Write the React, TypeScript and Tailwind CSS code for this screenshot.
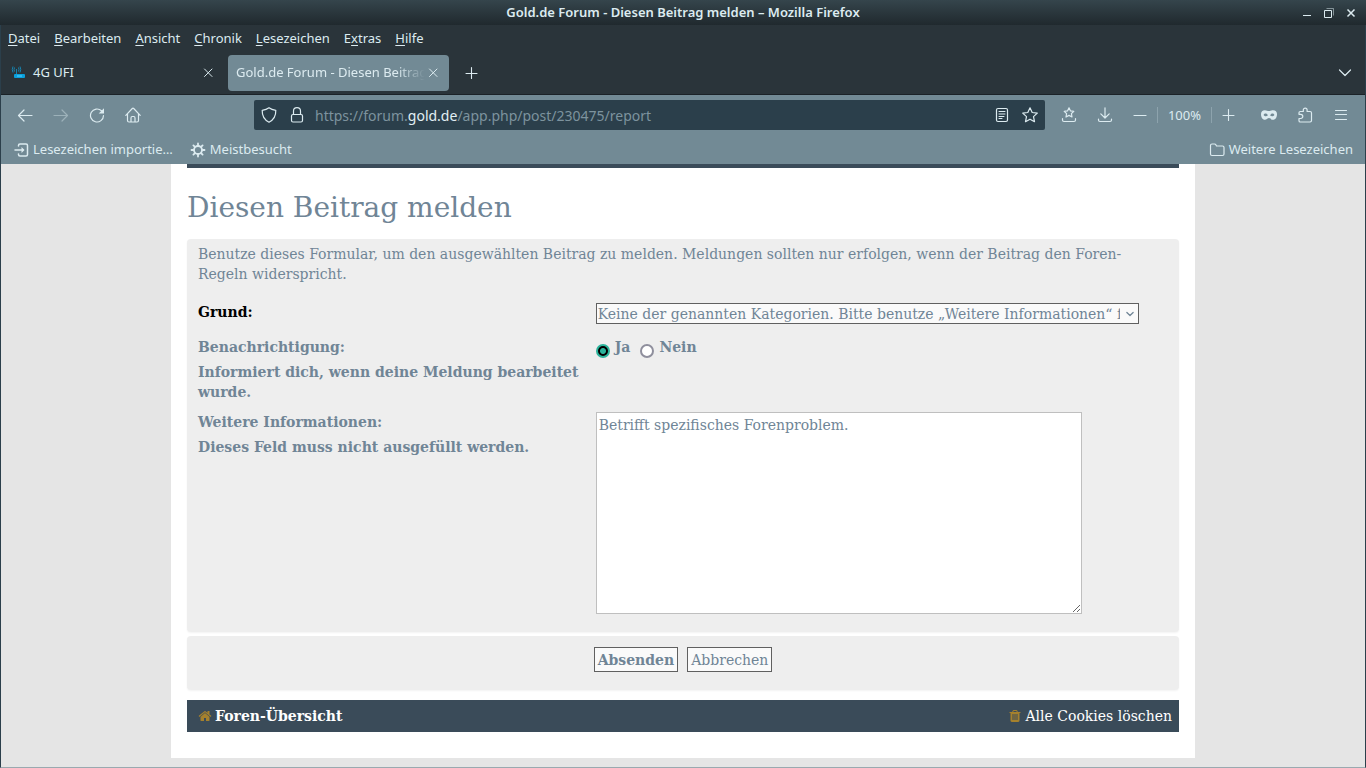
import type { ReactNode } from "react";
import { useState } from "react";

const menus = [
  { before: "", key: "D", after: "atei" },
  { before: "", key: "B", after: "earbeiten" },
  { before: "", key: "A", after: "nsicht" },
  { before: "", key: "C", after: "hronik" },
  { before: "", key: "L", after: "esezeichen" },
  { before: "E", key: "x", after: "tras" },
  { before: "", key: "H", after: "ilfe" },
];

function Icon({ children, className = "h-4 w-4" }: { children: ReactNode; className?: string }) {
  return (
    <svg
      viewBox="0 0 16 16"
      fill="none"
      stroke="currentColor"
      strokeWidth="1.2"
      strokeLinecap="round"
      strokeLinejoin="round"
      aria-hidden="true"
      className={`shrink-0 ${className}`}
    >
      {children}
    </svg>
  );
}

function ToolButton({ label, children, className = "w-9" }: { label: string; children: ReactNode; className?: string }) {
  return (
    <button type="button" aria-label={label} className={`flex h-8 shrink-0 items-center justify-center ${className}`}>
      {children}
    </button>
  );
}

function CloseIcon() {
  return (
    <Icon>
      <path d="M4.500 4l7.500 7.500M12 4l-7.500 7.500" strokeWidth="1" />
    </Icon>
  );
}

function PlusIcon() {
  return (
    <Icon>
      <path d="M8.500 2.500v11M3 8.500h11" strokeWidth="1.100" />
    </Icon>
  );
}

function TitleBar() {
  return (
    <div className="grid h-[25px] grid-cols-[1fr_auto_1fr] items-center bg-linear-to-b from-[#35454c] to-[#20292e] text-[#dcebf0]">
      <span />
      <span className="text-[13px] font-semibold">Gold.de Forum - Diesen Beitrag melden – Mozilla Firefox</span>
      <div className="flex justify-end gap-1 pr-1.5">
        <button type="button" aria-label="Minimieren">
          <svg viewBox="0 0 18 18" className="h-[18px] w-[18px]" aria-hidden="true">
            <path d="M5 11h8v1H5z" fill="currentColor" />
          </svg>
        </button>
        <button type="button" aria-label="Wiederherstellen">
          <svg viewBox="0 0 18 18" className="h-[18px] w-[18px]" fill="none" stroke="currentColor" aria-hidden="true">
            <path d="M6.500 4.500h7v7" strokeOpacity=".5" />
            <path d="M4.500 6.500h7v7h-7z" />
          </svg>
        </button>
        <button type="button" aria-label="Schließen">
          <svg viewBox="0 0 18 18" className="h-[18px] w-[18px]" fill="none" stroke="currentColor" aria-hidden="true">
            <path d="M5.500 5.500l7 7M12.500 5.500l-7 7" strokeWidth="1.500" />
          </svg>
        </button>
      </div>
    </div>
  );
}

function MenuBar() {
  return (
    <nav className="flex h-[27px] items-center gap-3.5 px-[7px]">
      {menus.map((menu) => (
        <button key={menu.key} type="button">
          {menu.before}
          <u className="underline-offset-2">{menu.key}</u>
          {menu.after}
        </button>
      ))}
    </nav>
  );
}

function TabStrip() {
  return (
    <div className="flex h-[43px] items-center border-b border-[#1b2227]">
      <div className="flex h-9 w-[227px] items-center pr-3 pl-2.5">
        <svg viewBox="0 0 16 16" className="h-4 w-4" aria-hidden="true">
          <path
            d="M5.500 4v5M3.500 2.500q-1 2 0 4M7.500 2.500q1 2 0 4M2 1.500q-1.500 3 0 6M9 1.500q1.500 3 0 6"
            stroke="#1683ae"
            fill="none"
          />
          <rect x="3" y="9" width="11" height="4" rx="1" fill="#0aa0dc" />
          <path d="M6 11h5" stroke="#55d0ff" />
        </svg>
        <button type="button" className="ml-[6px] flex-1 text-left">
          4G UFI
        </button>
        <button type="button" aria-label="Tab schließen">
          <CloseIcon />
        </button>
      </div>
      <div className="flex h-9 w-[221px] items-center rounded-sm bg-[#728a95] pr-2 pl-2">
        <button
          type="button"
          className="flex-1 overflow-hidden text-left whitespace-nowrap [mask-image:linear-gradient(to_right,black_85%,transparent)]"
        >
          Gold.de Forum - Diesen Beitrag melden
        </button>
        <button type="button" aria-label="Tab schließen">
          <CloseIcon />
        </button>
      </div>
      <ToolButton label="Neuer Tab" className="ml-1 w-9">
        <PlusIcon />
      </ToolButton>
      <ToolButton label="Alle Tabs auflisten" className="mr-0.5 ml-auto w-9">
        <Icon>
          <path d="M2.500 5L8 10.500l5.500-5.500" />
        </Icon>
      </ToolButton>
    </div>
  );
}

function AddressBar() {
  return (
    <div className="ml-[103px] flex h-[30px] min-w-0 flex-1 items-center rounded-xs bg-[#2b3f4b] px-[7px]">
      <Icon>
        <path d="M8 .8C10 2.300 12.500 3 14.800 3.300C15 9 12.500 13 8 15.200C3.500 13 1 9 1.200 3.300C3.500 3 6 2.300 8 .8z" />
      </Icon>
      <Icon className="ml-3 h-4 w-4">
        <rect x="2.500" y="7.500" width="11" height="7.500" rx="1.500" />
        <path d="M4.500 7.500V4a3.500 3.300 0 0 1 7 0v3.500" />
      </Icon>
      <div className="ml-2.5 flex-1 truncate text-[14px] text-[#7d939e]">
        https://forum.<span className="text-[#e2eff4]">gold.de</span>/app.php/post/230475/report
      </div>
      <button type="button" aria-label="Leseansicht" className="mr-3">
        <Icon>
          <rect x="2.500" y="1.500" width="11" height="13" rx="1.500" />
          <path d="M5 4.500h6M5 7h6M5 9.500h5M5 11.500h3" strokeWidth="1" />
        </Icon>
      </button>
      <button type="button" aria-label="Lesezeichen hinzufügen">
        <Icon>
          <path d="M8 .8l2.200 4.700 5.100.6-3.800 3.500 1 5.100L8 12.200l-4.500 2.500 1-5.100L.7 6.100l5.100-.6z" />
        </Icon>
      </button>
    </div>
  );
}

function NavBar() {
  return (
    <div className="flex h-10 items-center px-1.5">
      <ToolButton label="Zurück">
        <Icon>
          <path d="M15 8.500H1.500M7 3L1.500 8.500L7 14" />
        </Icon>
      </ToolButton>
      <ToolButton label="Vor" className="w-9 opacity-40">
        <Icon>
          <path d="M1 8.500h13.500M9 3L14.500 8.500L9 14" />
        </Icon>
      </ToolButton>
      <ToolButton label="Neu laden">
        <Icon>
          <path d="M14.500 8.500A6.500 6.500 0 1 1 12.500 3.800" />
          <path d="M15 1.200v5.300H9.700z" fill="currentColor" stroke="none" />
        </Icon>
      </ToolButton>
      <ToolButton label="Startseite">
        <Icon>
          <path d="M.8 8.300L7.300 1.500q.7-.7 1.400 0L15.200 8.300M2.500 7v6.500q0 1.500 1.500 1.500h8q1.500 0 1.500-1.500V7M6 15v-4q0-1.500 1.200-1.500h1.600q1.200 0 1.200 1.500v4" />
        </Icon>
      </ToolButton>
      <AddressBar />
      <ToolButton label="Lesezeichen" className="ml-1.5 w-9">
        <Icon>
          <path d="M8 .8l1.500 3.100 3.300.4-2.400 2.300.6 3.400L8 8.400 5 10l.6-3.400-2.400-2.300 3.300-.4zM1.500 11.500V13q0 1.500 1.500 1.500h10q1.500 0 1.500-1.500v-1.500" />
        </Icon>
      </ToolButton>
      <ToolButton label="Downloads">
        <Icon>
          <path d="M8 .8v10M3.800 6.800L8 11l4.200-4.200M1.500 12v1q0 1.500 1.500 1.500h10q1.500 0 1.500-1.500v-1" />
        </Icon>
      </ToolButton>
      <ToolButton label="Verkleinern" className="w-[34px]">
        <Icon>
          <path d="M2 8.500h12" />
        </Icon>
      </ToolButton>
      <button type="button" className="h-4 w-[55px] border-x border-[#8da3ad] text-center leading-4">
        100%
      </button>
      <ToolButton label="Vergrößern" className="mr-[7px] w-8">
        <PlusIcon />
      </ToolButton>
      <ToolButton label="Privater Modus">
        <Icon>
          <path
            d="M0 7C0 4.500 1.500 3.200 3.800 3.200c1.900 0 2.700.9 4.200.9s2.300-.9 4.200-.9C14.500 3.200 16 4.500 16 7c0 3.300-1.500 5.800-3.900 5.800-2 0-2.700-1.700-4.100-1.700s-2.100 1.700-4.100 1.700C1.500 12.800 0 10.300 0 7zM2.600 8c.9 1.500 3.300 1.700 4.300.2C5.900 6.200 3.500 6 2.600 8zm6.500.2c1 1.500 3.400 1.300 4.300-.2-.9-2-3.300-1.800-4.300.2z"
            fill="currentColor"
            fillRule="evenodd"
            stroke="none"
          />
        </Icon>
      </ToolButton>
      <ToolButton label="Erweiterungen">
        <Icon>
          <path d="M2 7V5.800q0-1.300 1.300-1.300h3V3a1.900 1.900 0 0 1 3.800 0v1.500h3q1.400 0 1.400 1.400v7.700q0 1.400-1.400 1.400H3.300Q2 15 2 13.700v-2.200h1.700a2 2 0 0 0 0-4.200H2z" />
        </Icon>
      </ToolButton>
      <ToolButton label="Menü öffnen">
        <Icon>
          <path d="M2.500 3.500h11M2.500 7.500h11M2.500 12.500h11" strokeWidth="1.100" />
        </Icon>
      </ToolButton>
    </div>
  );
}

function BookmarksBar() {
  return (
    <div className="flex h-[29px] items-center px-3">
      <button type="button" className="flex items-center gap-1">
        <Icon>
          <path d="M5.500 4V3.500Q5.500 2 7 2h6q1.500 0 1.500 1.500v9Q14.500 14 13 14H7q-1.500 0-1.500-1.500V12M2 8h8" strokeWidth="1.500" />
          <path d="M8.500 5l3 3-3 3z" fill="currentColor" stroke="none" />
        </Icon>
        Lesezeichen importie…
      </button>
      <button type="button" className="ml-[17px] flex items-center gap-1">
        <Icon>
          <circle cx="8" cy="8" r="4" strokeWidth="1.800" />
          <path
            d="M8 1.500v2M8 12.500v2M1.500 8h2M12.500 8h2M3.400 3.400l1.300 1.300M11.300 11.300l1.300 1.300M3.400 12.600l1.300-1.300M11.300 4.700l1.300-1.300"
            strokeWidth="1.800"
          />
        </Icon>
        Meistbesucht
      </button>
      <button type="button" className="ml-auto flex items-center gap-1">
        <Icon>
          <path d="M1.500 12V3.500Q1.500 2 3 2h2.500q1 0 1.500 1l.5 1h6Q15 4 15 5.500V12q0 1.500-1.500 1.500H3Q1.500 13.500 1.500 12z" />
        </Icon>
        Weitere Lesezeichen
      </button>
    </div>
  );
}

const radioClass =
  "mt-[7px] h-3.5 w-3.5 shrink-0 appearance-none rounded-full border-2 border-[#8f8f9d] bg-white checked:border-[#2bb39b] checked:bg-[radial-gradient(circle,#2bb39b_0_2.5px,#000_3.5px)]";

function ReportForm() {
  const [notify, setNotify] = useState(true);

  return (
    <form onSubmit={(event) => event.preventDefault()}>
      <div className="rounded-sm bg-[#eee] px-[11px] pt-[5px] pb-[18px] shadow-xs">
        <p>
          Benutze dieses Formular, um den ausgewählten Beitrag zu melden. Meldungen sollten nur erfolgen, wenn der
          Beitrag den Foren-Regeln widerspricht.
        </p>

        <div className="mt-[18px] grid grid-cols-[41%_1fr] font-bold">
          <label htmlFor="reason" className="text-black">
            Grund:
          </label>
          <div className="relative mt-px mr-[29px]">
            <select
              id="reason"
              className="block h-[21px] w-full appearance-none border border-[#606060] bg-[#fafafa] pr-[18px] pl-px font-normal"
            >
              <option>
                Keine der genannten Kategorien. Bitte benutze „Weitere Informationen“ für eine genauere Beschreibung.
              </option>
            </select>
            <Icon className="pointer-events-none absolute top-1.5 right-1 h-2.5 w-2.5">
              <path d="M3 5.500l5 5 5-5" strokeWidth="2" />
            </Icon>
          </div>
        </div>

        <div className="mt-[13px] grid grid-cols-[41%_1fr] font-bold">
          <div className="space-y-[5px] pr-2.5">
            <p>Benachrichtigung:</p>
            <p>Informiert dich, wenn deine Meldung bearbeitet wurde.</p>
          </div>
          <div className="flex items-start gap-2.5">
            <label className="flex items-start gap-[5px]">
              <input type="radio" name="notify" checked={notify} onChange={() => setNotify(true)} className={radioClass} />
              Ja
            </label>
            <label className="flex items-start gap-[5px]">
              <input type="radio" name="notify" checked={!notify} onChange={() => setNotify(false)} className={radioClass} />
              Nein
            </label>
          </div>
        </div>

        <div className="mt-2.5 grid grid-cols-[41%_1fr] font-bold">
          <div className="space-y-[5px] pr-2.5">
            <label htmlFor="details" className="block">
              Weitere Informationen:
            </label>
            <p>Dieses Feld muss nicht ausgefüllt werden.</p>
          </div>
          <textarea
            id="details"
            defaultValue="Betrifft spezifisches Forenproblem."
            className="block h-[202px] w-[85%] border border-[#bfbfbf] bg-white p-0.5 font-normal"
          />
        </div>
      </div>

      <div className="mt-1 flex justify-center gap-[9px] rounded-sm bg-[#eee] pt-[11px] pb-[18px] shadow-xs">
        <button type="submit" className="h-[25px] border border-[#606060] bg-[#fafafa] px-[3px] font-bold">
          Absenden
        </button>
        <button type="button" className="h-[25px] border border-[#606060] bg-[#fafafa] px-[3px]">
          Abbrechen
        </button>
      </div>
    </form>
  );
}

function FooterBar() {
  return (
    <footer className="mt-2.5 flex h-8 items-center justify-between bg-[#3a4b59] pr-[7px] pl-[11px] text-white">
      <a href="#index" className="flex items-center gap-[3px] font-bold">
        <svg viewBox="0 0 1792 1792" fill="#a5812d" className="h-3.5 w-3.5" aria-hidden="true">
          <path d="M1472 992v480q0 26-19 45t-45 19h-384v-384h-256v384h-384q-26 0-45-19t-19-45v-480q0-1 .5-3t.5-3l575-474 575 474q1 2 1 6zm223-69l-62 74q-8 9-21 11h-3q-13 0-21-7l-692-577-692 577q-12 8-24 7-13-2-21-11l-62-74q-8-10-7-23.500t11-21.500l719-599q32-26 76-26t76 26l244 204v-195q0-14 9-23t23-9h192q14 0 23 9t9 23v408l219 182q10 8 11 21.500t-7 23.500z" />
        </svg>
        Foren-Übersicht
      </a>
      <a href="#cookies" className="flex items-center gap-[3px]">
        <svg viewBox="0 0 1792 1792" fill="#a5812d" className="h-3.5 w-3.5" aria-hidden="true">
          <path d="M704 1376v-704q0-14-9-23t-23-9h-64q-14 0-23 9t-9 23v704q0 14 9 23t23 9h64q14 0 23-9t9-23zm256 0v-704q0-14-9-23t-23-9h-64q-14 0-23 9t-9 23v704q0 14 9 23t23 9h64q14 0 23-9t9-23zm256 0v-704q0-14-9-23t-23-9h-64q-14 0-23 9t-9 23v704q0 14 9 23t23 9h64q14 0 23-9t9-23zm-544-992h448l-48-117q-7-9-17-11h-317q-10 2-17 11zm928 32v64q0 14-9 23t-23 9h-96v948q0 83-47 143.500t-113 60.500h-832q-66 0-113-58.500t-47-141.500v-952h-96q-14 0-23-9t-9-23v-64q0-14 9-23t23-9h309l70-167q15-37 54-63t79-26h320q40 0 79 26t54 63l70 167h309q14 0 23 9t9 23z" />
        </svg>
        Alle Cookies löschen
      </a>
    </footer>
  );
}

export default function App() {
  return (
    <div className="flex min-h-screen flex-col bg-[#2a343a] font-['Noto_Sans',sans-serif] text-[13px] text-[#dcebf0]">
      <TitleBar />
      <div className="flex flex-1 flex-col border-x border-b border-x-[#2b3f4b] border-b-[#9aa9af]">
        <MenuBar />
        <TabStrip />
        <div className="bg-[#728a95]">
          <NavBar />
          <BookmarksBar />
        </div>
        <main className="flex-1 bg-[#e5e5e5] pb-[9px] font-['DejaVu_Serif',serif] text-[14px] leading-5 text-[#708596]">
          <div className="mx-auto max-w-[1024px] bg-white px-4 pb-[26px]">
            <div className="h-1 bg-[#3a4b59]" />
            <h2 className="pt-[22px] pb-[13px] text-[28px] leading-9">Diesen Beitrag melden</h2>
            <ReportForm />
            <FooterBar />
          </div>
        </main>
      </div>
    </div>
  );
}
